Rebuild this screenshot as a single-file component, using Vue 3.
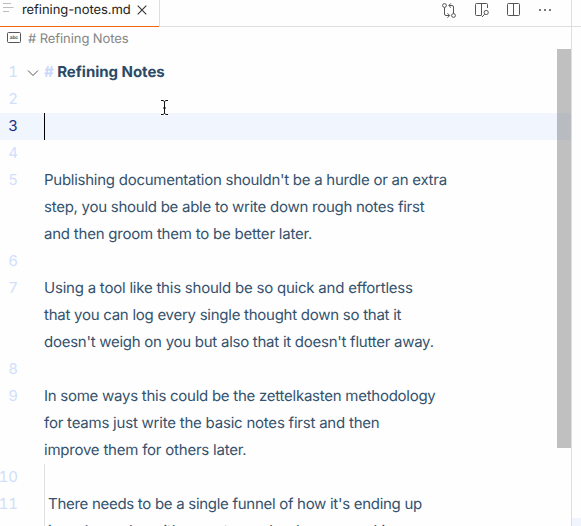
<script setup>
const rows = [
  { n: 1, text: 'Refining Notes', heading: true },
  { n: 2, text: '' },
  { n: 3, text: '', active: true },
  { n: 4, text: '' },
  { n: 5, text: "Publishing documentation shouldn't be a hurdle or an extra" },
  { text: 'step, you should be able to write down rough notes first' },
  { text: 'and then groom them to be better later.', loose: true },
  { n: 6, text: '' },
  { n: 7, text: 'Using a tool like this should be so quick and effortless', loose: true },
  { text: 'that you can log every single thought down so that it' },
  { text: "doesn't weigh on you but also that it doesn't flutter away." },
  { n: 8, text: '' },
  { n: 9, text: 'In some ways this could be the zettelkasten methodology' },
  { text: 'for teams just write the basic notes first and then', loose: true },
  { text: 'improve them for others later.', loose: true },
  { n: 10, text: '', guide: true },
  { n: 11, text: "There needs to be a single funnel of how it's ending up", guide: true },
  { text: "in a place where it's easy to see be done or marking", guide: true },
]
</script>

<template>
  <div class="window">
    <main class="pane">
      <header class="tabs">
        <div class="tab">
          <svg class="file" width="12" height="12" viewBox="0 0 12 12"><path d="M0 1.500h8M0 5.500h10.500M0 9.500h6" /></svg>
          <span class="name">refining-notes.md</span>
          <svg class="close" width="10" height="10" viewBox="0 0 10 10"><path d="M.7.7l8.600 8.600M9.300.7L.7 9.300" /></svg>
        </div>
        <div class="actions">
          <svg width="16" height="16" viewBox="0 0 16 16"><circle cx="2.500" cy="3.500" r="1.900" /><circle cx="11.500" cy="13.500" r="1.900" /><path d="M2.500 5.500V12q0 1.500 1.500 1.500h3.500M5.500 11.300l2.200 2.200-2.200 2.200M11.500 11.500V5q0-1.500-1.500-1.500H6.800M9 1.300L6.800 3.500 9 5.700" /></svg>
          <svg width="16" height="16" viewBox="0 0 16 16"><path d="M7 13.500H2.500q-1 0-1-1v-10q0-1 1-1h10q1 0 1 1V6M7.500 1.500v12M8 15l2.700-2.800" /><circle cx="12.200" cy="10.500" r="2.100" /></svg>
          <svg width="16" height="16" viewBox="0 0 16 16"><rect x="1.500" y="1.500" width="12" height="12" rx="1" /><path d="M7.500 1.500v12" /></svg>
          <svg class="dots" width="16" height="16" viewBox="0 0 16 16"><path d="M2 7h2v2H2zM7 7h2v2H7zM12 7h2v2h-2z" /></svg>
        </div>
      </header>
      <nav class="crumbs">
        <svg width="14" height="12" viewBox="0 0 14 12"><rect x=".5" y=".5" width="13" height="10" rx="1" /><text x="2.700" y="7.300">abc</text></svg>
        <span># Refining Notes</span>
      </nav>
      <section class="editor">
        <div v-for="(row, i) in rows" :key="i" class="row" :class="{ active: row.active, guide: row.guide, loose: row.loose }">
          <span class="number">{{ row.n }}</span>
          <span class="fold"><svg v-if="row.heading" width="12" height="8" viewBox="0 0 12 8"><path d="M1 1.500L6 6.500 11 1.500" /></svg></span>
          <span class="text" :class="{ heading: row.heading }"><i v-if="row.heading">#&nbsp;</i>{{ row.text }}</span>
        </div>
        <div class="thumb"></div>
        <svg class="pointer" width="9" height="17" viewBox="0 0 9 17"><path class="halo" d="M1 1.500h2l1.500 1L6 1.500h2M4.500 2.500v12M1 15.500h2l1.500-1 1.500 1h2M3 9h3" /><path d="M1 1.500h2l1.500 1L6 1.500h2M4.500 2.500v12M1 15.500h2l1.500-1 1.500 1h2M3 9h3" /></svg>
      </section>
    </main>
    <aside class="next"><div class="next-tabs"></div><div class="next-line"></div></aside>
  </div>
</template>

<style>
body { overflow: hidden; }
</style>
<style scoped>
* { box-sizing: border-box; }
.window { display: flex; width: 581px; height: 526px; overflow: hidden; background: #fefefe; font-family: Inter, sans-serif; color: #34526d; text-rendering: geometricPrecision; }
.pane { display: flex; flex-direction: column; width: 571px; flex: none; }
svg { display: block; flex: none; fill: none; stroke: #555; }
.tabs { display: flex; height: 27px; flex: none; border-bottom: 1px solid #dedede; }
.tab { display: flex; width: 160px; height: 27px; padding: 0 0 7px 3px; align-items: center; border-right: 1px solid #dedede; background: linear-gradient(#f36310, #f36310) left bottom / 159px 1px no-repeat; }
.file { margin-top: -4px; stroke: #bdbdbd; }
.name { width: 112px; margin-left: 7px; font-size: 13px; letter-spacing: -.07px; line-height: 20px; color: #222; white-space: nowrap; }
.close { margin-left: 3px; stroke: #333; stroke-width: 1.1; }
.actions { display: flex; gap: 16px; margin: 2px 18px 0 auto; }
.actions svg { overflow: visible; }
.dots { fill: #777; stroke: none; margin-left: -1px; }
.crumbs { display: flex; height: 22px; flex: none; padding: 5px 0 0 7px; gap: 7px; font-size: 13px; letter-spacing: -.08px; line-height: 15px; color: #858585; }
.crumbs text { font: bold 5px "Liberation Sans", sans-serif; fill: #555; stroke: none; }
.editor { position: relative; height: 477px; padding-top: 10px; overflow: hidden; }
.row { display: flex; height: 27px; font-size: 15px; line-height: 25px; }
.number { display: flex; justify-content: flex-end; width: 18px; flex: none; color: #d2dffb; font-variant-numeric: tabular-nums; }
.fold { display: flex; align-items: center; width: 26px; flex: none; padding: 1px 0 0 9px; }
.text { white-space: nowrap; letter-spacing: -.26px; }
.loose .text { letter-spacing: -.22px; }
.guide .text { border-left: 1px solid #e0e0e0; padding-left: 3px; letter-spacing: -.29px; }
.text.heading { font-weight: 700; letter-spacing: -.03px; color: #2b4a66; }
.heading i { font-style: normal; color: #cbd8fa; }
.active { background: #f0f5fe; }
.active .number { color: #1c2f80; }
.active .text { width: 1px; background: #000; }
.thumb { position: absolute; right: 0; top: 0; width: 14px; height: 399px; background: rgba(100, 100, 100, .4); }
.pointer { position: absolute; left: 160px; top: 50px; stroke: #111; }
.halo { stroke: #fff; stroke-width: 2.500; }
.next { display: flex; flex-direction: column; width: 10px; border-left: 1px solid #dedede; }
.next-tabs { height: 27px; border-bottom: 1px solid #dedede; }
.next-line { margin-top: auto; height: 8px; background: #f0f5fe; }
</style>
